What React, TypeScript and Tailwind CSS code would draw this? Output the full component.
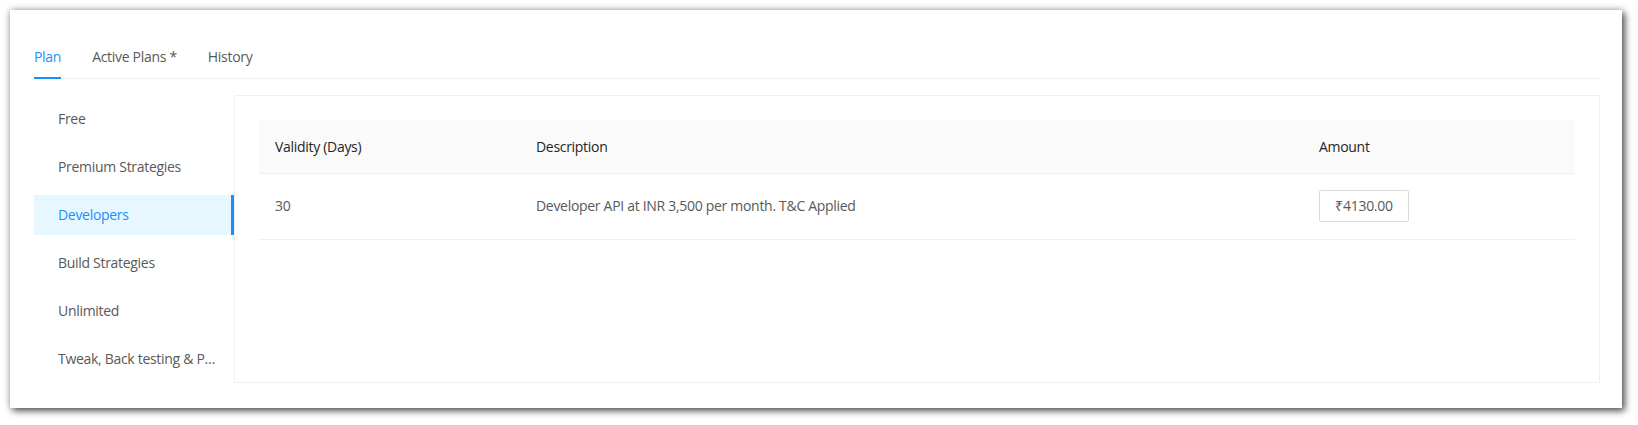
import React, { useState } from 'react';

const tabs = ['Plan', 'Active Plans *', 'History'];
const plans = ['Free', 'Premium Strategies', 'Developers', 'Build Strategies', 'Unlimited', 'Tweak, Back testing & Paper trading'];

export default function App() {
  const [tab, setTab] = useState('Plan');
  const [plan, setPlan] = useState('Developers');

  return (
    <div className="min-h-[425px] bg-white pt-[10px] pl-[10px] font-['Open_Sans',sans-serif] text-[14px] tracking-[-0.3px] text-[#595959]">
      <div className="w-[1612px] h-[398px] bg-white pl-6 pr-[22px] pt-6 shadow-[3px_3px_7px_rgba(0,0,0,0.6),0_0_7px_rgba(0,0,0,0.3)]">
        {/* tabs */}
        <div className="flex gap-[31px] border-b border-[#f0f0f0]">
          {tabs.map((t) => (
            <button
              key={t}
              onClick={() => setTab(t)}
              className={`relative pt-3 pb-[10px] leading-[22px] tracking-[-0.3px] ${tab === t ? 'text-[#1890ff]' : 'text-[#595959]'}`}
            >
              {t}
              {tab === t && <span className="absolute left-0 right-0 bottom-[-1px] h-[2px] bg-[#1890ff]" />}
            </button>
          ))}
        </div>

        <div className="flex mt-4">
          {/* side menu */}
          <ul className="w-[200px] shrink-0">
            {plans.map((p) => (
              <li
                key={p}
                onClick={() => setPlan(p)}
                className={`mt-1 mb-2 h-10 leading-10 pl-6 pr-4 truncate cursor-pointer ${
                  plan === p ? 'bg-[#e6f7ff] text-[#1890ff] border-r-[3px] border-[#1890ff]' : ''
                }`}
              >
                {p}
              </li>
            ))}
          </ul>

          {/* content */}
          <div className="flex-1 h-[288px] border border-[#f0f0f0] p-6">
            <table className="w-full border-collapse table-fixed">
              <thead>
                <tr className="bg-[#fafafa] text-[#262626] text-left">
                  <th className="w-[261px] font-normal px-4 pt-4 pb-[15px] leading-[22px] border-b border-[#f0f0f0]">Validity (Days)</th>
                  <th className="font-normal px-4 pt-4 pb-[15px] leading-[22px] border-b border-[#f0f0f0]">Description</th>
                  <th className="w-[272px] font-normal px-4 pt-4 pb-[15px] leading-[22px] border-b border-[#f0f0f0]">Amount</th>
                </tr>
              </thead>
              <tbody>
                <tr>
                  <td className="px-4 pt-4 pb-[17px] leading-[22px] border-b border-[#f0f0f0]">30</td>
                  <td className="px-4 pt-4 pb-[17px] leading-[22px] border-b border-[#f0f0f0]">Developer API at INR 3,500 per month. T&amp;C Applied</td>
                  <td className="px-4 pt-4 pb-[17px] leading-[22px] border-b border-[#f0f0f0]">
                    <div className="w-[90px] h-8 leading-[30px] border border-[#d9d9d9] rounded-[2px] text-center">₹4130.00</div>
                  </td>
                </tr>
              </tbody>
            </table>
          </div>
        </div>
      </div>
    </div>
  );
}
